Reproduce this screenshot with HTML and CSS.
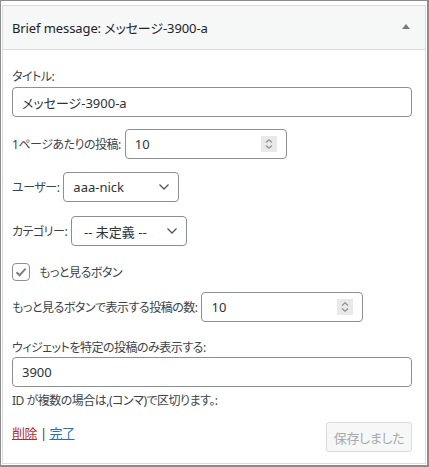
FILE: index.html
```html
<!DOCTYPE html>
<html lang="ja">
<head>
    <meta charset="UTF-8">
    <title>Brief message</title>
    <link rel="stylesheet" href="styles.css">
</head>
<body>
    <div class="frame">
        <div class="widget">
            <div class="widget-top">
                <h3 class="widget-title">Brief message: <span class="in-title">メッセージ-3900-a</span></h3>
                <span class="toggle"></span>
            </div>

            <div class="widget-inside">
                <p class="field-label">タイトル:</p>
                <input class="widefat" type="text" value="メッセージ-3900-a">

                <p class="row row-posts">
                    <label>1ページあたりの投稿:</label>
                    <span class="num">
                        <input type="text" value="10">
                        <svg class="spin" width="16" height="16" viewBox="0 0 16 16">
                            <rect width="16" height="16" fill="#e9e9ea"/>
                            <path d="M5 6.5 L8 3.8 L11 6.5 M5 9.5 L8 12.2 L11 9.5" fill="none" stroke="#8a8d91" stroke-width="1.1"/>
                        </svg>
                    </span>
                </p>

                <p class="row row-user">
                    <label>ユーザー:</label>
                    <span class="select sel-user">aaa-nick</span>
                </p>

                <p class="row row-cat">
                    <label>カテゴリー:</label>
                    <span class="select sel-cat">-- 未定義 --</span>
                </p>

                <p class="row row-check">
                    <span class="check">
                        <svg width="14" height="14" viewBox="0 0 14 14">
                            <path d="M2.5 7.2 L5.6 10.2 L11.6 3.6" fill="none" stroke="#7a828c" stroke-width="2"/>
                        </svg>
                    </span>
                    <label>もっと見るボタン</label>
                </p>

                <p class="row row-more">
                    <label>もっと見るボタンで表示する投稿の数:</label>
                    <span class="num">
                        <input type="text" value="10">
                        <svg class="spin" width="16" height="16" viewBox="0 0 16 16">
                            <rect width="16" height="16" fill="#e9e9ea"/>
                            <path d="M5 6.5 L8 3.8 L11 6.5 M5 9.5 L8 12.2 L11 9.5" fill="none" stroke="#8a8d91" stroke-width="1.1"/>
                        </svg>
                    </span>
                </p>

                <p class="field-label label-ids">ウィジェットを特定の投稿のみ表示する:</p>
                <input class="widefat" type="text" value="3900">
                <p class="note">ID が複数の場合は,(コンマ)で区切ります。:</p>

                <div class="widget-control">
                    <div class="links">
                        <a class="remove" href="#">削除</a> | <a class="close" href="#">完了</a>
                    </div>
                    <button class="save" disabled>保存しました</button>
                </div>
            </div>
        </div>
    </div>
</body>
</html>
```

FILE: styles.css
```css
html, body {
    margin: 0;
    padding: 0;
    background: #fff;
}
body {
    font-family: "Noto Sans", "Noto Sans CJK JP", sans-serif;
    font-size: 12px;
    letter-spacing: -0.5px;
    color: #3c434a;
    font-feature-settings: "palt";
}
.frame {
    width: 429px;
    height: 467px;
    box-sizing: border-box;
    border-top: 1px solid #8c8c8c;
    border-left: 1px solid #8c8c8c;
    border-right: 2px solid #8c8c8c;
    border-bottom: 2px solid #8c8c8c;
    padding: 4px 1px 1px 1px;
    display: flex;
    flex-direction: column;
}
.widget {
    flex: 1;
    border: 1px solid #dcdcde;
    background: #fff;
    display: flex;
    flex-direction: column;
}
.widget-top {
    height: 43px;
    background: #f6f7f7;
    border-bottom: 1px solid #dcdcde;
    display: flex;
    align-items: center;
    justify-content: space-between;
    padding: 0 15px 0 9px;
}
.widget-title {
    margin: 0;
    font-size: 13px;
    font-weight: 400;
    letter-spacing: -0.1px;
    color: #1d2327;
}
.toggle {
    width: 0;
    height: 0;
    border-left: 4px solid transparent;
    border-right: 4px solid transparent;
    border-bottom: 5px solid #787c82;
    margin-top: -2px;
}
.widget-inside {
    padding: 0 13px 0 9px;
    display: flex;
    flex-direction: column;
    align-items: flex-start;
}
p {
    margin: 0;
}
.field-label {
    line-height: 18px;
    margin-top: 18px;
}
input {
    font-family: inherit;
    font-feature-settings: "palt";
    font-size: 13px;
    color: #2c3338;
    border: 1px solid #8c8f94;
    border-radius: 4px;
    box-sizing: border-box;
    height: 30px;
    padding: 0 9px;
    outline: none;
    background: #fff;
}
.widefat {
    width: 400px;
    margin-top: 1px;
}
.row {
    display: flex;
    align-items: center;
    gap: 4px;
}
.row-posts { margin-top: 12px; }
.row-user { margin-top: 13px; }
.row-cat { margin-top: 14px; }
.row-check { margin-top: 17px; gap: 9px; }
.row-more { margin-top: 11px; }
.num {
    position: relative;
    display: block;
}
.num input {
    width: 162px;
}
.spin {
    position: absolute;
    right: 10px;
    top: 7px;
}
.select {
    height: 30px;
    box-sizing: border-box;
    border: 1px solid #8c8f94;
    border-radius: 4px;
    display: flex;
    align-items: center;
    font-size: 13px;
    letter-spacing: 0;
    color: #2c3338;
    padding-left: 9px;
    background: #fff url("data:image/svg+xml;utf8,<svg xmlns='http://www.w3.org/2000/svg' width='12' height='8' viewBox='0 0 12 8'><path d='M1.5 1.5 L6 6 L10.5 1.5' fill='none' stroke='%2350575e' stroke-width='1.3'/></svg>") no-repeat right 8px center;
}
.sel-user { width: 116px; }
.sel-cat { width: 116px; padding-left: 12px; }
.check {
    width: 18px;
    height: 18px;
    box-sizing: border-box;
    border: 1px solid #8c8f94;
    border-radius: 4px;
    display: flex;
    align-items: center;
    justify-content: center;
}
.label-ids {
    margin-top: 17px;
}
.label-ids + .widefat {
    margin-top: 0;
}
.note {
    line-height: 18px;
    margin-top: 5px;
}
.widget-control {
    align-self: stretch;
    display: flex;
    justify-content: space-between;
    align-items: flex-start;
    margin-top: 12px;
    padding-bottom: 11px;
}
.links {
    font-size: 13px;
    line-height: 18px;
    padding-top: 2px;
}
.remove {
    color: #b32d2e;
}
.close {
    color: #2271b1;
}
.save {
    font-family: inherit;
    font-feature-settings: "palt";
    font-size: 13px;
    letter-spacing: -0.3px;
    height: 30px;
    width: 86px;
    background: #f6f7f7;
    border: 1px solid #dcdcde;
    border-radius: 3px;
    color: #a7aaad;
    padding: 0;
}
```
